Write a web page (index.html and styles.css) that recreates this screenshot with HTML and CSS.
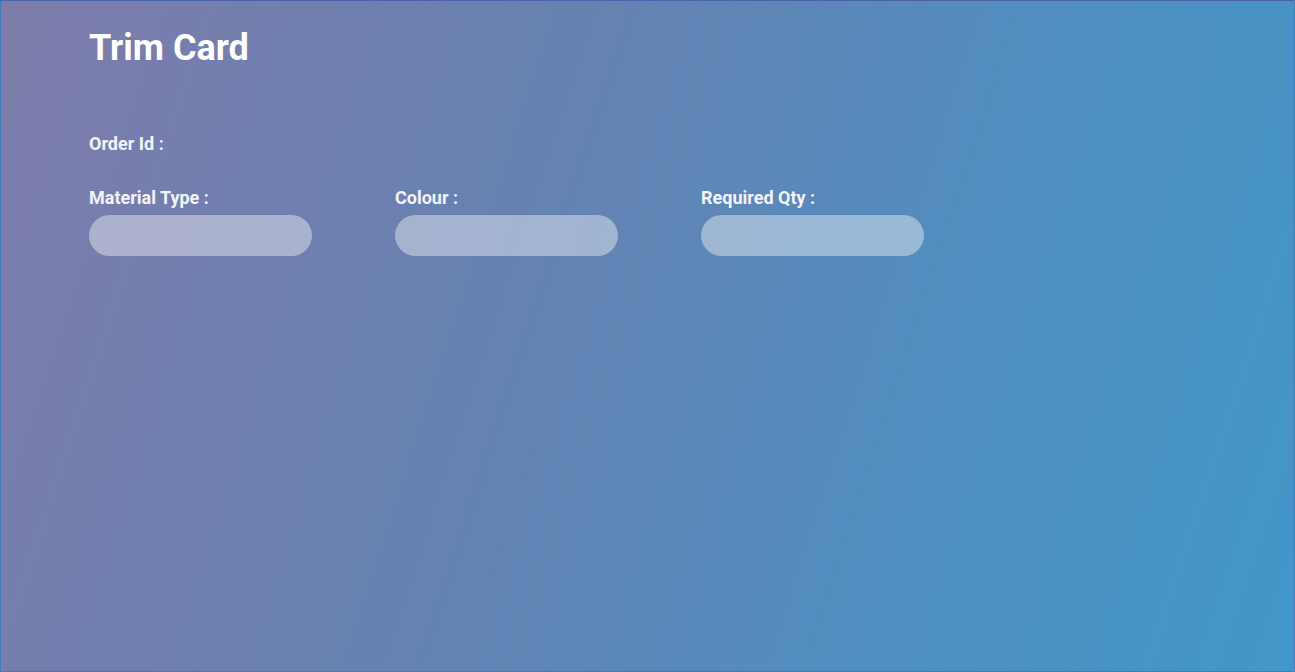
FILE: index.html
```html
<!DOCTYPE html>
<html>
<head>
<meta charset="utf-8">
<link rel="stylesheet" href="styles.css">
</head>
<body>
<div class="page">
  <h1 class="title">Trim Card</h1>
  <div class="field order">
    <label class="label">Order Id :</label>
  </div>
  <div class="row">
    <div class="field">
      <label class="label">Material Type :</label>
      <div class="input"></div>
    </div>
    <div class="field">
      <label class="label">Colour :</label>
      <div class="input"></div>
    </div>
    <div class="field">
      <label class="label">Required Qty :</label>
      <div class="input"></div>
    </div>
  </div>
</div>
</body>
</html>
```
FILE: styles.css
```css
html, body {
  margin: 0;
  padding: 0;
  height: 100%;
}
body {
  font-family: Roboto, "Liberation Sans", sans-serif;
}
.page {
  box-sizing: border-box;
  height: 672px;
  border: 1px solid #3f7dc0;
  border-top-color: #4a62a8;
  background: linear-gradient(108deg, #7e7cab 0%, #6582b2 40%, #4e90c2 75%, #4397c9 100%);
  padding: 26px 0 0 88px;
  color: #fff;
}
.title {
  margin: 0;
  font-size: 36px;
  font-weight: 700;
  line-height: 42px;
}
.field {
  display: flex;
  flex-direction: column;
}
.order {
  margin-top: 64px;
}
.label {
  font-size: 18px;
  font-weight: 700;
  line-height: 21px;
  color: #f2f2f8;
}
.row {
  display: flex;
  gap: 83px;
  margin-top: 33px;
}
.input {
  margin-top: 7px;
  width: 223px;
  height: 41px;
  border-radius: 21px;
  background: rgba(255, 255, 255, 0.4);
}
```
